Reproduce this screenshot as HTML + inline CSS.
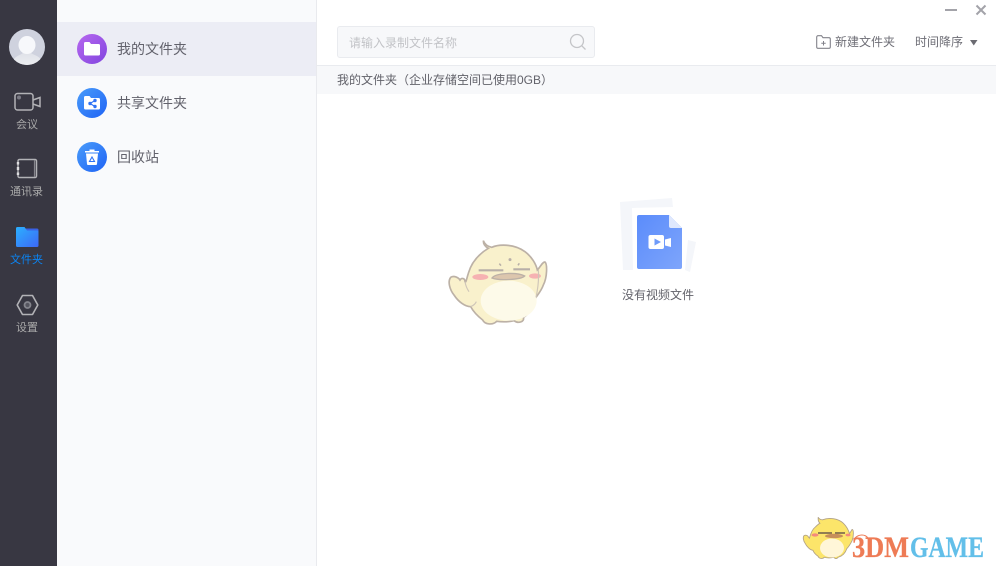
<!DOCTYPE html>
<html lang="zh">
<head>
<meta charset="utf-8">
<style>
html,body{margin:0;padding:0;width:996px;height:566px;overflow:hidden;background:#fff}
body{position:relative;font-family:"Liberation Sans","Noto Sans CJK SC",sans-serif;color:#555}
div,span,svg{position:absolute}
.t{white-space:nowrap;line-height:16px}
</style>
</head>
<body>
<div style="left:0;top:0;width:57px;height:566px;background:#383742"></div>
<div style="left:57px;top:0;width:259px;height:566px;background:#f9fafc"></div>
<div style="left:316px;top:0;width:1px;height:566px;background:#e9eaee"></div>
<div style="left:57px;top:22px;width:259px;height:54px;background:#ecedf5"></div>

<!-- avatar -->
<svg style="left:9px;top:29px" width="36" height="36" viewBox="0 0 36 36">
<defs><clipPath id="av"><circle cx="18" cy="18" r="18"/></clipPath>
<linearGradient id="avb" x1="0" y1="0" x2="0" y2="1"><stop offset="0" stop-color="#dcdee6"/><stop offset="1" stop-color="#eceDf1"/></linearGradient></defs>
<g clip-path="url(#av)"><rect width="36" height="36" fill="#cfd2de"/>
<path d="M13.500 21h9v3.500c3 1.500 7 2.500 9 5.500v6H5v-6c2-3 6-4 8.500-5.500z" fill="url(#avb)"/>
<ellipse cx="18" cy="16" rx="8.500" ry="9" fill="#f7f8fb"/></g>
</svg>

<!-- meeting -->
<svg style="left:14px;top:92px" width="28" height="20" viewBox="0 0 28 20" fill="none">
<rect x="1" y="1.500" width="18" height="16.500" rx="2.500" stroke="#b2b2b6" stroke-width="1.500"/>
<path d="M19 8l7-2.500v9L19 12" stroke="#b2b2b6" stroke-width="1.500"/>
<circle cx="5" cy="5.500" r="2" fill="#7a7a84"/>
</svg>
<div class="t" style="left:0;width:54px;top:117px;text-align:center;font-size:11px;color:#aaa">会议</div>

<!-- contacts -->
<svg style="left:16px;top:158px" width="22" height="21" viewBox="0 0 22 21" fill="none">
<rect x="2" y="1.500" width="18.500" height="18" rx="1.500" stroke="#b2b2b6" stroke-width="1.500"/>
<path d="M2 4v2.500M2 9v3M2 14.500v2.500" stroke="#dedee0" stroke-width="2.400"/>
<path d="M18.500 2v17" stroke="#85858c" stroke-width="1.200"/>
</svg>
<div class="t" style="left:0;width:53px;top:184px;text-align:center;font-size:11px;color:#aaa">通讯录</div>

<!-- folder -->
<svg style="left:16px;top:226px" width="23" height="22" viewBox="0 0 23 22">
<defs><linearGradient id="f1" x1="0" y1="0" x2="1" y2="1"><stop offset="0" stop-color="#2bb0ff"/><stop offset="1" stop-color="#3d68f6"/></linearGradient></defs>
<path d="M9 2.500h12a1.500 1.500 0 0 1 1.500 1.500V8H9z" fill="#3a62e6"/>
<path d="M0 2.500a1.500 1.500 0 0 1 1.500-1.500h7L11 4.500h10.500A1.500 1.500 0 0 1 22.500 6v13.500a1.500 1.500 0 0 1-1.500 1.500H1.500A1.500 1.500 0 0 1 0 19.500z" fill="url(#f1)"/>
</svg>
<div class="t" style="left:0;width:53px;top:252px;text-align:center;font-size:11px;color:#0b84f3">文件夹</div>

<!-- settings -->
<svg style="left:16px;top:294px" width="23" height="22" viewBox="0 0 23 22" fill="none">
<path d="M6.500 1.500h10L21.800 11l-5.300 9.500h-10L1.200 11z" stroke="#b2b2b6" stroke-width="1.600" stroke-linejoin="round"/>
<circle cx="11.500" cy="11" r="3" stroke="#85858d" stroke-width="1.800" fill="#55555f"/>
</svg>
<div class="t" style="left:0;width:54px;top:320px;text-align:center;font-size:11px;color:#aaa">设置</div>

<!-- list icons -->
<svg style="left:77px;top:34px" width="30" height="30" viewBox="0 0 30 30">
<defs><linearGradient id="p" x1="0" y1="0" x2="1" y2="1"><stop offset="0" stop-color="#b768ef"/><stop offset="1" stop-color="#8145df"/></linearGradient></defs>
<circle cx="15" cy="15" r="15" fill="url(#p)"/>
<path d="M7 9.500A1.500 1.500 0 0 1 8.500 8h4l1.500 2h7.500A1.500 1.500 0 0 1 23 11.500v8.500a1.500 1.500 0 0 1-1.500 1.500h-13A1.500 1.500 0 0 1 7 20z" fill="#fff"/>
</svg>
<div class="t" style="left:117px;top:41px;font-size:14px;color:#62626c">我的文件夹</div>

<svg style="left:77px;top:88px" width="30" height="30" viewBox="0 0 30 30">
<defs><linearGradient id="b" x1="0" y1="0" x2="1" y2="1"><stop offset="0" stop-color="#4a9cfa"/><stop offset="1" stop-color="#1f63f5"/></linearGradient></defs>
<circle cx="15" cy="15" r="15" fill="url(#b)"/>
<path d="M7 9.500A1.500 1.500 0 0 1 8.500 8h4l1.500 2h7.500A1.500 1.500 0 0 1 23 11.500v8.500a1.500 1.500 0 0 1-1.500 1.500h-13A1.500 1.500 0 0 1 7 20z" fill="#fff"/>
<path d="M18 12.500l-5 3 5 3" fill="none" stroke="#2f73f5" stroke-width="1.200"/>
<circle cx="18" cy="12.500" r="1.700" fill="#2f73f5"/><circle cx="13" cy="15.500" r="1.700" fill="#2f73f5"/><circle cx="18" cy="18.500" r="1.700" fill="#2f73f5"/>
</svg>
<div class="t" style="left:117px;top:95px;font-size:14px;color:#62626c">共享文件夹</div>

<svg style="left:77px;top:142px" width="30" height="30" viewBox="0 0 30 30">
<circle cx="15" cy="15" r="15" fill="url(#b)"/>
<path d="M12.500 7.500h5v1.500h4.500v1.500H8V9h4.500z" fill="#fff"/>
<path d="M9 11.500h12l-1 10.500a1 1 0 0 1-1 1h-8a1 1 0 0 1-1-1z" fill="#fff"/>
<path d="M15 15l2.500 4.500h-5z" fill="none" stroke="#2f73f5" stroke-width="1.100"/>
</svg>
<div class="t" style="left:117px;top:149px;font-size:14px;color:#62626c">回收站</div>

<!-- window controls -->
<div style="left:945px;top:9px;width:12px;height:2px;background:#a3a3a9"></div>
<svg style="left:975px;top:4px" width="12" height="12" viewBox="0 0 12 12"><path d="M1.500 1.500l9 9M10.500 1.500l-9 9" stroke="#a3a3a9" stroke-width="2"/></svg>

<!-- search -->
<div style="left:337px;top:26px;width:256px;height:30px;background:#f7f8fa;border:1px solid #e9ebef;border-radius:3px"></div>
<div class="t" style="left:349px;top:35px;font-size:12px;color:#c2c3c7">请输入录制文件名称</div>
<svg style="left:569px;top:33px" width="18" height="18" viewBox="0 0 18 18" fill="none"><circle cx="8" cy="8" r="6.500" stroke="#c4c5c8" stroke-width="1.300"/><path d="M12.800 12.800l3.700 3.700" stroke="#c4c5c8" stroke-width="1.300"/></svg>

<!-- toolbar -->
<svg style="left:816px;top:35px" width="15" height="14" viewBox="0 0 15 14" fill="none">
<path d="M.7 2A1.300 1.300 0 0 1 2 .7h3.500L7 2.700h6A1.300 1.300 0 0 1 14.300 4v8A1.300 1.300 0 0 1 13 13.300H2A1.300 1.300 0 0 1 .7 12z" stroke="#82828a" stroke-width="1.100"/>
<path d="M7.500 6v4.500M5.300 8.200h4.400" stroke="#82828a" stroke-width="1"/>
</svg>
<div class="t" style="left:835px;top:34px;font-size:12px;color:#6e6e76">新建文件夹</div>
<div class="t" style="left:915px;top:34px;font-size:12px;color:#6e6e76">时间降序</div>
<svg style="left:970px;top:40px" width="8" height="6" viewBox="0 0 8 6"><path d="M0 0h7.500L3.750 5.500z" fill="#6b6b72"/></svg>

<!-- path bar -->
<div style="left:317px;top:65px;width:679px;height:1px;background:#e9ebef"></div>
<div style="left:317px;top:66px;width:679px;height:28px;background:#f7f8fa"></div>
<div class="t" style="left:337px;top:72px;font-size:12px;color:#62626a">我的文件夹（企业存储空间已使用0GB）</div>

<!-- empty doc illustration -->
<svg style="left:610px;top:190px" width="95" height="90" viewBox="0 0 95 90">
<defs><linearGradient id="d" x1="0" y1="0" x2="1" y2="1"><stop offset="0" stop-color="#5b8cfb"/><stop offset="1" stop-color="#7ea5fb"/></linearGradient></defs>
<path d="M10 12L62 8l1 9-41 1 1 62H13z" fill="#f4f6fa"/>
<path d="M86 52l-6 30-5-2 3-30z" fill="#f4f6fa"/>
<path d="M27 27a2 2 0 0 1 2-2h30l13 13v39a2 2 0 0 1-2 2H29a2 2 0 0 1-2-2z" fill="url(#d)"/>
<path d="M59 25l13 13H61a2 2 0 0 1-2-2z" fill="#dfe8fd"/>
<path d="M38.500 47a2 2 0 0 1 2-2h11.500a2 2 0 0 1 2 2v10a2 2 0 0 1-2 2H40.500a2 2 0 0 1-2-2z" fill="#fff"/>
<path d="M55 49.500l6-1.500v9l-6-1.500z" fill="#fff"/>
<path d="M44.500 48.500l6.500 3.500-6.500 3.500z" fill="#6f9bfa"/>
</svg>
<div class="t" style="left:622px;top:287px;font-size:12px;color:#62626a">没有视频文件</div>

<!-- duck -->
<svg style="left:430px;top:190px" width="140" height="150" viewBox="0 0 420 450">
<path d="M160 152C165 165 175 170 185 172C205 163 250 160 285 185C305 200 318 222 322 240C330 232 338 215 345 216C352 222 352 262 340 285C335 300 325 312 318 322C312 350 295 375 280 382C285 395 265 402 252 392C235 396 215 396 200 394C190 405 165 405 158 390C145 380 130 365 122 350C105 350 85 335 72 315C60 300 52 275 62 262C72 256 85 262 90 270C95 262 105 265 105 275C108 280 110 265 115 250C125 215 150 190 175 175C165 170 160 162 160 152Z" fill="#f9f1cc" stroke="#bcb1a6" stroke-width="5"/>
<ellipse cx="236" cy="332" rx="84" ry="60" fill="#fdfae9"/>
<ellipse cx="151" cy="261" rx="24" ry="9" fill="#f6b2b2"/>
<ellipse cx="315" cy="258" rx="18" ry="8" fill="#f6b2b2"/>
<path d="M186 264C198 248 262 246 284 258C272 270 205 272 186 264Z" fill="#dcc6ad" stroke="#bcb1a6" stroke-width="4"/>
<path d="M146 241h74M250 238h50" stroke="#b8afa8" stroke-width="6.500"/>
<circle cx="240" cy="209" r="4.500" fill="#b8afa8"/>
<path d="M208 221l5 6M268 220l-4 6" stroke="#b8afa8" stroke-width="4.500"/>
<path d="M325 240c2 25 0 50-7 82M105 275c2 12 5 20 12 30M122 350c8-3 14-8 17-15" fill="none" stroke="#cfc6b8" stroke-width="3.500"/>
</svg>

<!-- watermark -->
<svg style="left:800px;top:512px" width="196" height="54" viewBox="0 0 196 54">
<g transform="translate(2.500 0) scale(.87)">
<path d="M18 6c1 2 3 3 5 3 7-3 18-2 24 4 4 4 6 8 7 12l3-5c2 0 2 8 0 13-2 4-4 7-6 9-2 6-6 9-10 10-1 2-4 2-5 0-3 1-8 1-11 0-1 2-6 2-7-1-3-2-5-4-6-7-3 0-7-4-9-8-2-3-3-7-1-9 2-1 4 0 5 2l1 1c1-4 3-10 7-13 1-1 3-3 5-4-1-1-2-3-2-5z" fill="#fce56a" stroke="#b2a286" stroke-width="1"/>
</g>
<ellipse cx="32" cy="36" rx="12" ry="9.500" fill="#fff6d8"/>
<path d="M18 21h14M35 21h10" stroke="#6d5c4a" stroke-width="1.600"/>
<ellipse cx="34" cy="24" rx="9" ry="2.200" fill="#c78f5a"/>
<ellipse cx="15" cy="23" rx="3.500" ry="1.600" fill="#f48a7c"/><ellipse cx="48" cy="23" rx="2.500" ry="1.400" fill="#f48a7c"/>
<path d="M55 26c4-4 10-4 13 0" fill="none" stroke="#ee7b55" stroke-width="1"/>
<text x="52" y="45" font-family="Liberation Serif,serif" font-weight="700" font-size="30" fill="#ee7b55" stroke="#ee7b55" stroke-width=".3" textLength="57" lengthAdjust="spacingAndGlyphs">3DM</text>
<text x="110" y="45" font-family="Liberation Serif,serif" font-weight="700" font-size="30" fill="#62bfe9" stroke="#62bfe9" stroke-width=".3" textLength="74" lengthAdjust="spacingAndGlyphs">GAME</text>
</svg>
</body>
</html>
